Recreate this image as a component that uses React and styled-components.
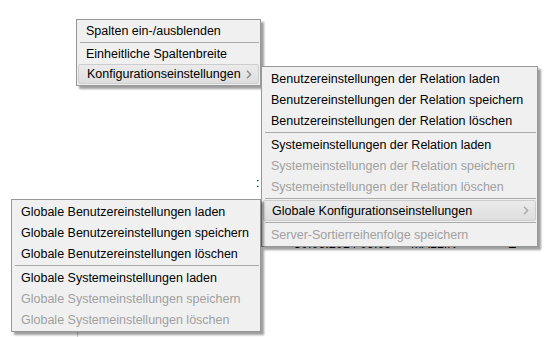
import React from "react";
import styled, { createGlobalStyle } from "styled-components";

const Global = createGlobalStyle`
  html, body { margin: 0; padding: 0; background: #ffffff; }
  body { font-family: "Liberation Sans", Arial, sans-serif; }
`;

const Page = styled.div`
  position: relative;
  width: 547px;
  height: 337px;
  overflow: hidden;
  background: #ffffff;
  font-family: "Liberation Sans", Arial, sans-serif;
  font-size: 12.5px;
  color: #000;
`;

const Backdrop = styled.div`
  display: flex;
  flex-direction: column;
  padding-top: 176px;
`;

const StrayRow = styled.div`
  height: 14px;
  line-height: 14px;
  padding-left: 256px;
`;

const Table = styled.div`
  margin-top: 44px;
  display: grid;
  grid-template-columns: 78px 1fr;
  height: 120px;
`;

const FirstCol = styled.div`
  border-right: 1px solid #c8c8c8;
`;

const DataCol = styled.div`
  display: flex;
  flex-direction: column;
`;

const DataRow = styled.div`
  display: flex;
  height: 20px;
  align-items: center;
`;

const Cell = styled.div`
  width: ${(p) => p.$w}px;
  flex: none;
  white-space: nowrap;
`;

const Menu = styled.div`
  position: absolute;
  left: ${(p) => p.$x}px;
  top: ${(p) => p.$y}px;
  width: ${(p) => p.$w}px;
  box-sizing: border-box;
  background: #f0f0f0;
  border: 1px solid #979797;
  padding: 1px 0;
  box-shadow: 3px 3px 2px rgba(0, 0, 0, 0.38);
  display: flex;
  flex-direction: column;
  z-index: ${(p) => p.$z};
`;

const Item = styled.div`
  height: ${(p) => p.$h}px;
  box-sizing: border-box;
  display: flex;
  align-items: center;
  justify-content: space-between;
  padding: 0 ${(p) => p.$pr}px 0 9px;
  white-space: nowrap;
  color: ${(p) => (p.$disabled ? "#a0a0a0" : "#000000")};
  ${(p) =>
    p.$active &&
    `
    margin: 0 1px;
    padding-left: 8px;
    border: 1px solid #cdcdcd;
    border-radius: 2px;
    background: linear-gradient(#ebebeb, #dedede);
  `}
`;

const Sep = styled.div`
  height: 3px;
  box-sizing: border-box;
  margin: 0 1px 0 3px;
  padding-top: 1px;
  &::before {
    content: "";
    display: block;
    height: 1px;
    background: #a9a9a9;
  }
`;

const Chevron = ({ color = "#8a8a8a" }) => (
  <svg width="6" height="9" viewBox="0 0 6 9">
    <path d="M1 0.8 L4.6 4.5 L1 8.2" fill="none" stroke={color} strokeWidth="1.4" />
  </svg>
);

function MenuList({ x, y, w, z, h, pr, entries }) {
  return (
    <Menu $x={x} $y={y} $w={w} $z={z}>
      {entries.map((e, i) =>
        e === "-" ? (
          <Sep key={i} />
        ) : (
          <Item key={i} $h={h} $pr={pr} $disabled={e.disabled} $active={e.active}>
            <span>{e.label}</span>
            {e.sub && <Chevron color={e.arrowColor} />}
          </Item>
        )
      )}
    </Menu>
  );
}

const menu1 = [
  { label: "Spalten ein-/ausblenden" },
  "-",
  { label: "Einheitliche Spaltenbreite" },
  { label: "Konfigurationseinstellungen", sub: true, active: true, arrowColor: "#8a8a8a" },
];

const menu2 = [
  { label: "Benutzereinstellungen der Relation laden" },
  { label: "Benutzereinstellungen der Relation speichern" },
  { label: "Benutzereinstellungen der Relation löschen" },
  "-",
  { label: "Systemeinstellungen der Relation laden" },
  { label: "Systemeinstellungen der Relation speichern", disabled: true },
  { label: "Systemeinstellungen der Relation löschen", disabled: true },
  "-",
  { label: "Globale Konfigurationseinstellungen", sub: true, active: true, arrowColor: "#a8a8a8" },
  "-",
  { label: "Server-Sortierreihenfolge speichern", disabled: true },
];

const menu3 = [
  { label: "Globale Benutzereinstellungen laden" },
  { label: "Globale Benutzereinstellungen speichern" },
  { label: "Globale Benutzereinstellungen löschen" },
  "-",
  { label: "Globale Systemeinstellungen laden" },
  { label: "Globale Systemeinstellungen speichern", disabled: true },
  { label: "Globale Systemeinstellungen löschen", disabled: true },
];

export default function App() {
  return (
    <Page>
      <Global />
      <Backdrop>
        <StrayRow>:</StrayRow>
        <Table>
          <FirstCol />
          <DataCol>
            <DataRow>
              <Cell $w={216} />
              <Cell $w={117}>30.06.2014 09:09</Cell>
              <Cell $w={97}>MALLIN</Cell>
              <Cell $w={20}>E</Cell>
            </DataRow>
          </DataCol>
        </Table>
      </Backdrop>
      <MenuList x={76} y={19} w={185} z={1} h={20} pr={6} entries={menu1} />
      <MenuList x={261} y={66} w={277} z={2} h={21} pr={6} entries={menu2} />
      <MenuList x={11} y={199} w={250} z={3} h={21} pr={6} entries={menu3} />
    </Page>
  );
}
